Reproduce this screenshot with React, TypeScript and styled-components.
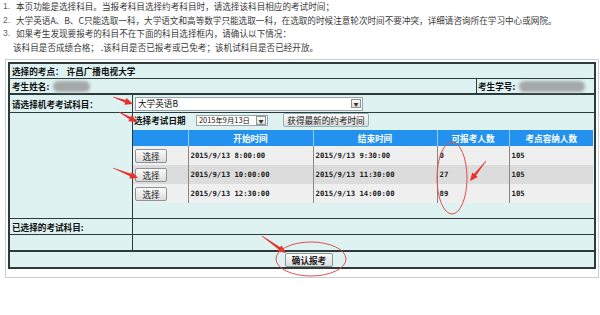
import React from 'react'
import styled, { createGlobalStyle } from 'styled-components'

const GlobalStyle = createGlobalStyle`
  html, body {
    margin: 0;
    padding: 0;
    background: #ffffff;
  }
  body {
    font-family: "Noto Sans CJK SC", "Noto Sans", sans-serif;
    color: #222;
  }
  * {
    box-sizing: border-box;
  }
`

const LINE = '#2e3b3b'
const CJK = '"Noto Sans CJK SC", "Noto Sans", sans-serif'

const Page = styled.div`
  position: relative;
  width: 600px;
  height: 315px;
  overflow: hidden;
`

const Notes = styled.ol`
  margin: 0;
  padding: 0 0 0 3px;
  list-style: none;
  height: 55px;
  font-size: 8.6px;
  line-height: 13.7px;
  color: #3a3a3a;
`

const Note = styled.li<{ $indent?: boolean }>`
  display: flex;
  white-space: nowrap;
  padding-left: ${({ $indent }) => ($indent ? '10px' : '0')};
`

const Num = styled.span`
  width: 13px;
  color: #666;
  font-family: "Liberation Sans", sans-serif;
`

const Frame = styled.div`
  margin: 4px 0 0 5px;
  width: 594px;
  border: 1px solid #c6d0d0;
  padding: 2px 2px 8px 2px;
  background: #fff;
`

const Board = styled.div`
  border: 2px solid ${LINE};
  background: #def2f2;
  font-size: 8.6px;
  font-weight: bold;
  color: #111;
`

const Row = styled.div<{ $h: number; $line?: number }>`
  display: flex;
  align-items: center;
  height: ${({ $h, $line = 1 }) => $h + $line}px;
  border-bottom: ${({ $line = 1 }) => $line}px solid ${LINE};
  padding-left: 2px;
  white-space: nowrap;
`

const SplitRow = styled.div<{ $h: number; $line?: number }>`
  display: grid;
  grid-template-columns: 1fr 118px;
  height: ${({ $h, $line = 1 }) => $h + $line}px;
  border-bottom: ${({ $line = 1 }) => $line}px solid ${LINE};
  white-space: nowrap;
`

const Cell = styled.div<{ $divider?: boolean }>`
  display: flex;
  align-items: center;
  padding-left: ${({ $divider }) => ($divider ? '1px' : '2px')};
  border-left: ${({ $divider }) => ($divider ? `1px solid ${LINE}` : 'none')};
`

const FormRow = styled.div<{ $h: number; $line?: number }>`
  display: grid;
  grid-template-columns: 123px 1fr;
  height: ${({ $h, $line = 1 }) => $h + $line}px;
  border-bottom: ${({ $line = 1 }) => $line}px solid ${LINE};
`

const Label = styled.div<{ $top?: boolean }>`
  display: flex;
  align-items: ${({ $top }) => ($top ? 'flex-start' : 'center')};
  padding-left: 2px;
  border-right: 1px solid ${LINE};
  white-space: nowrap;
`

const Field = styled.div`
  display: flex;
  align-items: center;
  min-width: 0;
`

const Stack = styled.div`
  display: flex;
  flex-direction: column;
`

const Value = styled.span`
  margin-left: 3px;
`

const Blur = styled.span<{ $w: number }>`
  display: inline-block;
  width: ${({ $w }) => $w}px;
  height: 11px;
  margin-left: 4px;
  border-radius: 6px;
  background: #a4a8a8;
  filter: blur(1.6px);
`

const Select = styled.div<{ $w: number; $h: number }>`
  display: flex;
  align-items: center;
  justify-content: space-between;
  width: ${({ $w }) => $w}px;
  height: ${({ $h }) => $h}px;
  margin-left: 2px;
  padding: 0 1px 0 2px;
  background: #fff;
  border: 1px solid #9aa4a4;
  font-weight: normal;
  color: #111;
  white-space: nowrap;
`

const SelectText = styled.span<{ $size: number }>`
  font-size: ${({ $size }) => $size}px;
  line-height: 1;
`

const Caret = styled.span`
  display: flex;
  align-items: center;
  justify-content: center;
  width: 10px;
  height: 9px;
  border: 1px solid #8c9696;
  background: linear-gradient(#fbfbfb, #dcdcdc);
  font-size: 5px;
  color: #333;
`

const Toolbar = styled.div`
  display: flex;
  align-items: center;
  height: 17px;
  padding: 0 0 3px 1px;
  white-space: nowrap;
`

const ToolLabel = styled.span`
  width: 60px;
`

const PlainButton = styled.button<{ $w: number }>`
  width: ${({ $w }) => $w}px;
  height: 14px;
  padding: 0;
  border: 1px solid #8a9494;
  border-radius: 2px;
  background: linear-gradient(#fbfbfb, #dcdcdc);
  font-family: ${CJK};
  font-size: 8.6px;
  line-height: 12px;
  color: #222;
  white-space: nowrap;
`

const RefreshButton = styled(PlainButton)`
  margin-left: 15px;
  border-color: #8fb3b8;
`

const Slots = styled.table`
  width: 460px;
  border-collapse: collapse;
  table-layout: fixed;
`

const Th = styled.th`
  height: 16px;
  padding: 0;
  background: #2392ef;
  color: #fff;
  font-size: 8.6px;
  font-weight: bold;
  text-align: center;
  border-left: 1px solid #9ccaf2;
  &:first-child {
    border-left: none;
  }
`

const Tr = styled.tr<{ $alt?: boolean }>`
  background: ${({ $alt }) => ($alt ? '#dcdcdc' : '#efefef')};
`

const Td = styled.td`
  height: 19px;
  padding: 0 0 0 2px;
  border-left: 1px solid #888;
  font-family: "DejaVu Sans Mono", monospace;
  font-size: 7.3px;
  font-weight: bold;
  color: #222;
  white-space: nowrap;
  &:first-child {
    border-left: none;
  }
`

const Footer = styled.div`
  display: flex;
  align-items: center;
  justify-content: center;
  height: 15px;
  padding-left: 14px;
`

const ConfirmButton = styled(PlainButton)`
  height: 14px;
  margin-top: 1px;
  font-weight: bold;
`

const Marks = styled.svg`
  position: absolute;
  left: 0;
  top: 0;
  pointer-events: none;
`

const slots = [
  { start: '2015/9/13 8:00:00', end: '2015/9/13 9:30:00', left: '0', cap: '105' },
  { start: '2015/9/13 10:00:00', end: '2015/9/13 11:30:00', left: '27', cap: '105' },
  { start: '2015/9/13 12:30:00', end: '2015/9/13 14:00:00', left: '89', cap: '105' },
]

// tapered red arrow from tail to tip
const arrow = (x1: number, y1: number, x2: number, y2: number) => {
  const dx = x2 - x1
  const dy = y2 - y1
  const len = Math.hypot(dx, dy)
  const ux = dx / len
  const uy = dy / len
  const nx = -uy
  const ny = ux
  const h = Math.min(8, len * 0.45)
  const hw = 3.6
  const bx = x2 - ux * h
  const by = y2 - uy * h
  const pts = [
    [x1 + nx * 0.3, y1 + ny * 0.3],
    [bx + nx * 1.3, by + ny * 1.3],
    [bx + nx * hw, by + ny * hw],
    [x2, y2],
    [bx - nx * hw, by - ny * hw],
    [bx - nx * 1.3, by - ny * 1.3],
    [x1 - nx * 0.3, y1 - ny * 0.3],
  ]
  return pts.map((p) => p.map((v) => v.toFixed(1)).join(',')).join(' ')
}

const arrows: [number, number, number, number][] = [
  [113, 97, 133, 104],
  [119, 112, 137, 122],
  [113, 168, 138, 178],
  [486, 161, 470, 181],
  [262, 236, 286, 253],
]

const App = () => {
  return (
    <Page>
      <GlobalStyle />
      <Notes>
        <Note>
          <Num>1.</Num>本页功能是选择科目。当报考科目选择约考科目时，请选择该科目相应的考试时间；
        </Note>
        <Note>
          <Num>2.</Num>大学英语A、B、C只能选取一科，大学语文和高等数学只能选取一科，在选取的时候注意轮次时间不要冲突，详细请咨询所在学习中心或网院。
        </Note>
        <Note>
          <Num>3.</Num>如果考生发现要报考的科目不在下面的科目选择框内，请确认以下情况：
        </Note>
        <Note $indent>该科目是否成绩合格；&nbsp;.该科目是否已报考或已免考；该机试科目是否已经开放。</Note>
      </Notes>

      <Frame>
        <Board>
          <Row $h={14}>
            选择的考点：<Value>许昌广播电视大学</Value>
          </Row>
          <SplitRow $h={14} $line={2}>
            <Cell>
              考生姓名:<Blur $w={37} />
            </Cell>
            <Cell $divider>
              考生学号:<Blur $w={66} />
            </Cell>
          </SplitRow>

          <FormRow $h={17}>
            <Label>请选择机考考试科目：</Label>
            <Field>
              <Select $w={228} $h={14}>
                <SelectText $size={8.6}>大学英语B</SelectText>
                <Caret>▼</Caret>
              </Select>
            </Field>
          </FormRow>
          <FormRow $h={105}>
            <Label />
            <Stack>
              <Toolbar>
                <ToolLabel>选择考试日期</ToolLabel>
                <Select $w={72} $h={11}>
                  <SelectText $size={7.4}>2015年9月13日</SelectText>
                  <Caret>▼</Caret>
                </Select>
                <RefreshButton $w={86}>获得最新的约考时间</RefreshButton>
              </Toolbar>
              <Slots>
                <colgroup>
                  <col style={{ width: 55 }} />
                  <col style={{ width: 125 }} />
                  <col style={{ width: 124 }} />
                  <col style={{ width: 72 }} />
                  <col style={{ width: 84 }} />
                </colgroup>
                <thead>
                  <tr>
                    <Th />
                    <Th>开始时间</Th>
                    <Th>结束时间</Th>
                    <Th>可报考人数</Th>
                    <Th>考点容纳人数</Th>
                  </tr>
                </thead>
                <tbody>
                  {slots.map((s, i) => (
                    <Tr key={s.start} $alt={i === 1}>
                      <Td>
                        <PlainButton $w={32}>选择</PlainButton>
                      </Td>
                      <Td>{s.start}</Td>
                      <Td>{s.end}</Td>
                      <Td>{s.left}</Td>
                      <Td>{s.cap}</Td>
                    </Tr>
                  ))}
                </tbody>
              </Slots>
            </Stack>
          </FormRow>
          <FormRow $h={15}>
            <Label>已选择的考试科目:</Label>
            <Field />
          </FormRow>
          <FormRow $h={15} $line={2}>
            <Label />
            <Field />
          </FormRow>
          <Footer>
            <ConfirmButton $w={48}>确认报考</ConfirmButton>
          </Footer>
        </Board>
      </Frame>

      <Marks width={600} height={315} viewBox="0 0 600 315">
        {arrows.map((a) => (
          <polygon key={a.join('-')} points={arrow(...a)} fill="#e8302c" />
        ))}
        <ellipse cx={452} cy={178} rx={15} ry={36} fill="none" stroke="#e0504c" strokeWidth={1} />
        <ellipse cx={311} cy={259} rx={35} ry={17} fill="none" stroke="#e0504c" strokeWidth={1} />
      </Marks>
    </Page>
  )
}

export default App
